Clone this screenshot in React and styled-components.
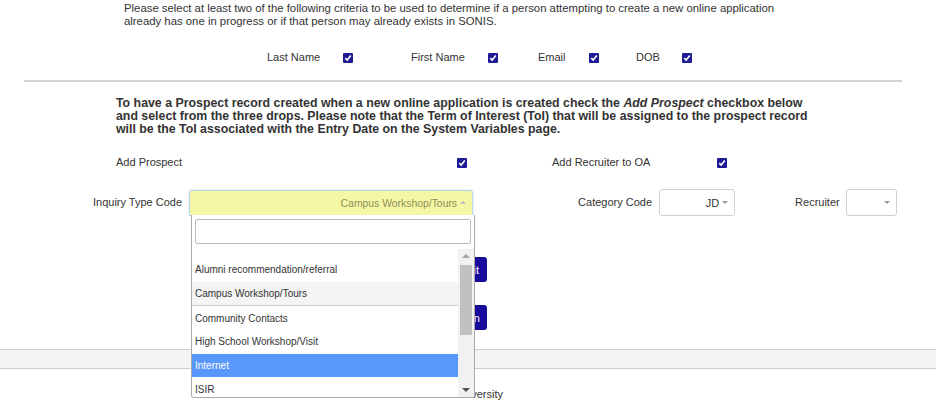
import React from "react";
import styled, { createGlobalStyle } from "styled-components";

const GlobalStyle = createGlobalStyle`
  body {
    margin: 0;
    background: #fff;
    font-family: "Liberation Sans", Arial, sans-serif;
    color: #333;
    overflow: hidden;
  }
`;

const Page = styled.div`
  width: 936px;
  height: 402px;
  position: relative;
`;

const Intro = styled.p`
  margin: 0;
  padding: 2px 0 0 124px;
  width: 660px;
  font-size: 11.35px;
  line-height: 13px;
  color: #333;
`;

const CriteriaRow = styled.div`
  display: grid;
  grid-template-columns: 76px 68px 77px 50px 51px 47px 46px 20px;
  align-items: center;
  margin-top: 23px;
  padding-left: 267px;
  height: 13px;
`;

const Label = styled.span`
  font-size: 11px;
  line-height: 13px;
  color: #333;
  white-space: nowrap;
`;

const Box = styled.span`
  display: inline-block;
  width: 10px;
  height: 10px;
  background: #1d1c96;
  border-radius: 1px;
  line-height: 0;
  svg {
    display: block;
  }
`;

const Rule = styled.hr`
  margin: 16px 34px 0 24px;
  border: none;
  height: 2px;
  background: #d5d5d5;
`;

const Notice = styled.p`
  margin: 15px 0 0;
  padding-left: 116px;
  width: 706px;
  font-size: 12.35px;
  line-height: 13px;
  font-weight: bold;
  color: #333;
  em {
    font-style: italic;
  }
`;

const ProspectRow = styled.div`
  display: grid;
  grid-template-columns: 341px 95px 165px 10px;
  align-items: center;
  margin-top: 20px;
  padding-left: 116px;
  height: 13px;
`;

const SelectRow = styled.div`
  display: flex;
  align-items: center;
  margin-top: 20px;
  padding-left: 93px;
  height: 27px;
`;

const Field = styled.div`
  display: flex;
  align-items: center;
  gap: ${(p) => p.$gap || 7}px;
  margin-left: ${(p) => p.$offset || 0}px;
  position: relative;
`;

const Select = styled.div`
  box-sizing: border-box;
  width: ${(p) => p.$width}px;
  height: ${(p) => (p.$open ? 26 : 27)}px;
  margin-top: ${(p) => (p.$open ? 1 : 0)}px;
  background: ${(p) => (p.$open ? "#f6f7a4" : "#fff")};
  border: 1px solid ${(p) => (p.$open ? "#bcd6ef" : "#d0d0d0")};
  border-radius: ${(p) => (p.$open ? "3px 3px 0 0" : "3px")};
  box-shadow: ${(p) => (p.$open ? "0 0 2px rgba(120,170,230,0.5)" : "none")};
  display: flex;
  align-items: center;
  justify-content: flex-end;
  padding-right: 15px;
  position: relative;
  font-size: ${(p) => (p.$open ? "10.4px" : "11px")};
  color: ${(p) => (p.$open ? "#8e8e5e" : "#333")};
  white-space: nowrap;
`;

const Caret = styled.span`
  position: absolute;
  right: 6px;
  top: 50%;
  margin-top: -2px;
  width: 0;
  height: 0;
  border-left: 3px solid transparent;
  border-right: 3px solid transparent;
  ${(p) =>
    p.$up
      ? "border-bottom: 3px solid #bbb;"
      : "border-top: 3px solid #999;"}
`;

const Dropdown = styled.div`
  position: absolute;
  top: 26px;
  left: 98px;
  width: 284px;
  height: 183px;
  box-sizing: border-box;
  background: #fff;
  border: 1px solid #aaa;
  border-top: none;
  border-radius: 0 0 3px 3px;
  z-index: 5;
  display: flex;
  flex-direction: column;
`;

const Search = styled.div`
  margin: 4px 3px 0;
  height: 25px;
  box-sizing: border-box;
  border: 1px solid #bbb;
  border-radius: 2px;
`;

const ListArea = styled.div`
  margin-top: 5px;
  flex: 1;
  display: flex;
  overflow: hidden;
`;

const List = styled.ul`
  list-style: none;
  margin: 0;
  padding: 9px 0 0;
  flex: 1;
  overflow: hidden;
`;

const Item = styled.li`
  height: 23.7px;
  display: flex;
  align-items: center;
  padding-left: 3px;
  font-size: 10px;
  color: ${(p) => (p.$active ? "#fff" : "#333")};
  background: ${(p) => (p.$active ? "#5897fb" : p.$current ? "#f4f4f4" : "transparent")};
  border-bottom: ${(p) => (p.$current ? "1px solid #ccc" : "none")};
  white-space: nowrap;
`;

const Scrollbar = styled.div`
  width: 16px;
  background: #f1f1f1;
  display: flex;
  flex-direction: column;
  align-items: center;
`;

const Arrow = styled.span`
  width: 0;
  height: 0;
  margin: ${(p) => (p.$up ? "5px 0 4px" : "auto 0 5px")};
  border-left: 4px solid transparent;
  border-right: 4px solid transparent;
  ${(p) =>
    p.$up ? "border-bottom: 4px solid #a3a3a3;" : "border-top: 4px solid #505050;"}
`;

const Thumb = styled.div`
  width: 12px;
  height: 70px;
  margin-top: 3px;
  background: #c1c1c1;
`;

const Actions = styled.div`
  display: flex;
  flex-direction: column;
  align-items: flex-end;
  gap: 23px;
  margin-top: 41px;
  width: 487px;
`;

const Button = styled.button`
  height: 25px;
  border: none;
  border-radius: 3px;
  background: #170b9b;
  color: #fff;
  font-family: inherit;
  font-size: 11px;
  padding: 0 ${(p) => p.$pad || 8}px;
`;

const Band = styled.div`
  margin-top: 19px;
  height: 18px;
  background: #f4f4f4;
  border-top: 1px solid #ccc;
  border-bottom: 1px solid #ccc;
`;

const Footer = styled.p`
  margin: 19px 0 0;
  width: 503px;
  text-align: right;
  font-size: 11px;
  color: #333;
`;

const Check = () => (
  <Box>
    <svg width="10" height="10" viewBox="0 0 10 10">
      <path
        d="M2.3 5.1 L4.2 7.1 L7.8 2.6"
        fill="none"
        stroke="#fff"
        strokeWidth="1.6"
      />
    </svg>
  </Box>
);

const options = [
  "Alumni recommendation/referral",
  "Campus Workshop/Tours",
  "Community Contacts",
  "High School Workshop/Visit",
  "Internet",
  "ISIR",
];

export default function App() {
  return (
    <Page>
      <GlobalStyle />
      <Intro>
        Please select at least two of the following criteria to be used to
        determine if a person attempting to create a new online application
        already has one in progress or if that person may already exists in
        SONIS.
      </Intro>
      <CriteriaRow>
        <Label>Last Name</Label>
        <Check />
        <Label>First Name</Label>
        <Check />
        <Label>Email</Label>
        <Check />
        <Label>DOB</Label>
        <Check />
      </CriteriaRow>
      <Rule />
      <Notice>
        To have a Prospect record created when a new online application is
        created check the <em>Add Prospect</em> checkbox below and select from
        the three drops. Please note that the Term of Interest (ToI) that will
        be assigned to the prospect record will be the ToI associated with the
        Entry Date on the System Variables page.
      </Notice>
      <ProspectRow>
        <Label>Add Prospect</Label>
        <Check />
        <Label>Add Recruiter to OA</Label>
        <Check />
      </ProspectRow>
      <SelectRow>
        <Field>
          <Label>Inquiry Type Code</Label>
          <Select $width={284} $open>
            Campus Workshop/Tours
            <Caret $up />
          </Select>
          <Dropdown>
            <Search />
            <ListArea>
              <List>
                {options.map((o) => (
                  <Item
                    key={o}
                    $current={o === "Campus Workshop/Tours"}
                    $active={o === "Internet"}
                  >
                    {o}
                  </Item>
                ))}
              </List>
              <Scrollbar>
                <Arrow $up />
                <Thumb />
                <Arrow />
              </Scrollbar>
            </ListArea>
          </Dropdown>
        </Field>
        <Field $offset={105}>
          <Label>Category Code</Label>
          <Select $width={76}>
            JD
            <Caret />
          </Select>
        </Field>
        <Field $offset={60} $gap={6}>
          <Label>Recruiter</Label>
          <Select $width={51}>
            <Caret />
          </Select>
        </Field>
      </SelectRow>
      <Actions>
        <Button>Submit</Button>
        <Button $pad={7}>Return</Button>
      </Actions>
      <Band />
      <Footer>© SONIS University</Footer>
    </Page>
  );
}
